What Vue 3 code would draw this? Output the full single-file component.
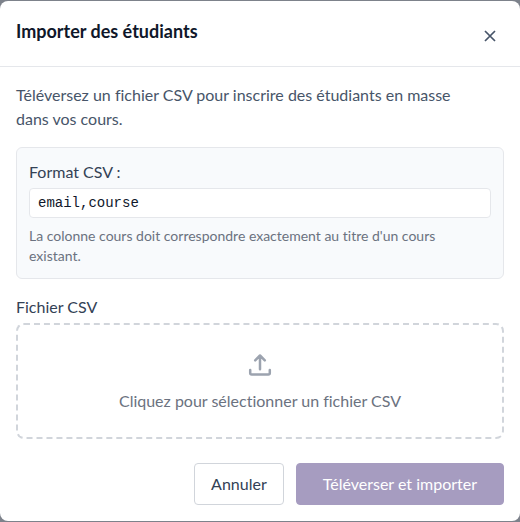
<script setup>
import { ref } from 'vue'

const fileInput = ref(null)

function pickFile() {
  fileInput.value?.click()
}
</script>

<template>
  <div class="overlay">
    <section class="dialog" role="dialog" aria-modal="true" aria-labelledby="dialog-title">
      <header class="header">
        <h2 id="dialog-title" class="title">Importer des étudiants</h2>
        <button type="button" class="close" aria-label="Fermer">
          <svg viewBox="0 0 20 20" width="20" height="20" aria-hidden="true">
            <path d="M5 5l10 10M15 5L5 15" />
          </svg>
        </button>
      </header>

      <div class="body">
        <p class="intro">Téléversez un fichier CSV pour inscrire des étudiants en masse dans vos cours.</p>

        <div class="format">
          <p class="label">Format CSV :</p>
          <code class="code">email,course</code>
          <p class="hint">La colonne cours doit correspondre exactement au titre d'un cours existant.</p>
        </div>

        <div class="field">
          <label class="label" for="csv-file">Fichier CSV</label>
          <input id="csv-file" ref="fileInput" class="file" type="file" accept=".csv" />
          <button type="button" class="drop" @click="pickFile">
            <svg class="upload" viewBox="0 0 32 32" width="32" height="32" aria-hidden="true">
              <path d="M6.2 21v3q0 1.5 1.5 1.5h16.6q1.5 0 1.5-1.5v-3M16 20.3V7M11.2 11.3l4.8-4.8 4.8 4.8" />
            </svg>
            <span>Cliquez pour sélectionner un fichier CSV</span>
          </button>
        </div>

        <footer class="actions">
          <button type="button" class="btn cancel">Annuler</button>
          <button type="button" class="btn submit" disabled>Téléverser et importer</button>
        </footer>
      </div>
    </section>
  </div>
</template>

<style>
body {
  margin: 0;
  background: #7d828b;
}
</style>

<style scoped>
.overlay {
  min-height: 100vh;
  display: grid;
  align-items: center;
  box-sizing: border-box;
  font-family: Lato, "Liberation Sans", sans-serif;
  font-size: 16px;
  line-height: 24px;
  font-variant-ligatures: none;
  background: #7d828b;
}

.dialog {
  background: #fff;
  border-radius: 8px;
  overflow: hidden;
}

.header {
  display: flex;
  justify-content: space-between;
  align-items: flex-start;
  padding: 16px;
  border-bottom: 1px solid #e5e7eb;
}

.title {
  margin: 0;
  font-size: 18px;
  line-height: 28px;
  font-weight: 700;
  color: #0f172a;
}

.close {
  display: flex;
  padding: 9px 4px 4px;
  border: 0;
  background: none;
  color: #475569;
}

.close path {
  fill: none;
  stroke: currentColor;
  stroke-width: 1.7;
}

.body {
  padding: 16px;
}

.intro {
  margin: 0 0 16px;
  padding-right: 24px;
  color: #475569;
}

.format {
  padding: 12px;
  border: 1px solid #e5e7eb;
  border-radius: 6px;
  background: #f8fafc;
}

.label {
  display: block;
  margin: 0 0 4px;
  color: #334155;
}

.code {
  display: block;
  padding: 4px 8px;
  border: 1px solid #e5e7eb;
  border-radius: 4px;
  background: #fff;
  color: #0f172a;
  font-family: "Liberation Mono", monospace;
  font-size: 14px;
  line-height: 20px;
}

.hint {
  margin: 8px 0 0;
  padding-right: 24px;
  font-size: 14px;
  line-height: 20px;
  color: #6b7280;
}

.field {
  position: relative;
  margin-top: 16px;
}

.file {
  position: absolute;
  width: 1px;
  height: 1px;
  opacity: 0;
  pointer-events: none;
}

.drop {
  display: flex;
  flex-direction: column;
  align-items: center;
  gap: 8px;
  width: 100%;
  padding: 24px;
  border: 2px dashed #d1d5db;
  border-radius: 8px;
  background: none;
  color: #6b7280;
  font: inherit;
}

.upload path {
  fill: none;
  stroke: #9ca3af;
  stroke-width: 2.5;
  stroke-linecap: round;
  stroke-linejoin: round;
}

.actions {
  display: flex;
  justify-content: flex-end;
  gap: 12px;
  margin-top: 24px;
}

.btn {
  padding: 8px 16px;
  border: 1px solid #d1d5db;
  border-radius: 4px;
  background: #fff;
  color: #334155;
  font: inherit;
}

.submit {
  padding: 8px 26px;
  border-color: #a69cc0;
  background: #a69cc0;
  color: #fff;
}
</style>
